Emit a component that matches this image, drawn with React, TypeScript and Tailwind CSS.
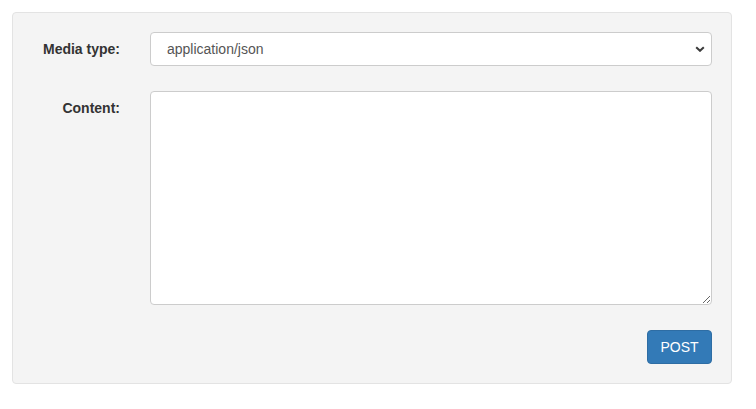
import { useState } from "react";

const Chevron = () => (
  <svg
    className="pointer-events-none absolute right-[7px] top-1/2 -translate-y-1/2"
    width="10"
    height="6"
    viewBox="0 0 10 6"
  >
    <path d="M1.2 1.2 5 4.8 8.8 1.2" fill="none" stroke="#3b3b3b" strokeWidth="2" />
  </svg>
);

export default function App() {
  const [mediaType, setMediaType] = useState("application/json");

  return (
    <div className="min-h-[409px] bg-white py-3 pl-3 pr-6 font-['Liberation_Sans',Arial,sans-serif] text-sm text-[#333]">
      <form className="flex flex-col gap-[25px] rounded border border-[#e3e3e3] bg-[#f4f4f4] p-[19px]">
        <div className="flex items-center gap-[30px]">
          <label className="w-[88px] text-right font-bold leading-5">Media type:</label>
          <div className="relative flex-1">
            <select
              value={mediaType}
              onChange={(e) => setMediaType(e.target.value)}
              className="h-[34px] w-full appearance-none rounded border border-[#ccc] bg-white pl-4 pr-6 text-sm text-[#555] outline-none"
            >
              <option>application/json</option>
              <option>application/x-www-form-urlencoded</option>
              <option>multipart/form-data</option>
            </select>
            <Chevron />
          </div>
        </div>

        <div className="flex items-start gap-[30px]">
          <label className="w-[88px] pt-[7px] text-right font-bold leading-5">Content:</label>
          <textarea className="h-[214px] flex-1 rounded border border-[#ccc] bg-white px-3 py-[6px] text-sm text-[#555] outline-none" />
        </div>

        <div className="flex justify-end">
          <button
            type="button"
            className="h-[34px] w-[65px] rounded border border-[#2e6da4] bg-[#337ab7] text-sm leading-5 text-white"
          >
            POST
          </button>
        </div>
      </form>
    </div>
  );
}
